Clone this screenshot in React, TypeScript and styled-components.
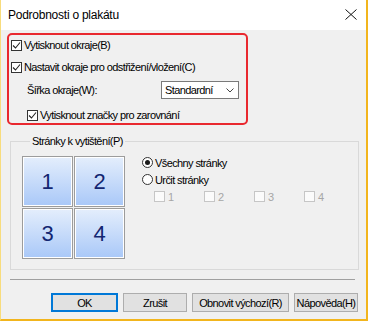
import * as React from 'react'
import styled, { createGlobalStyle } from 'styled-components'

const GlobalStyle = createGlobalStyle`
  html, body {
    margin: 0;
    padding: 0;
    background: #f0f0f0;
  }
  body {
    font-family: "Liberation Sans", Arial, sans-serif;
    font-size: 11px;
    color: #000;
  }
`

const Window = styled.div`
  box-sizing: border-box;
  width: 368px;
  height: 321px;
  background: #f0f0f0;
  border-left: 1px solid #f8dc7c;
  border-right: 2px solid #f2b51d;
  border-bottom: 2px solid #f2b51d;
  display: flex;
  flex-direction: column;
  overflow: hidden;
`

const TitleBar = styled.div`
  height: 29px;
  flex: none;
  background: #fff;
  display: flex;
  align-items: center;
  justify-content: space-between;
  padding: 0 8px 1px 7px;
`

const Title = styled.span`
  font-size: 12px;
  letter-spacing: -0.25px;
`

const CloseButton = styled.button`
  width: 14px;
  height: 14px;
  padding: 0;
  border: none;
  background: none;
  display: flex;
  align-items: center;
  justify-content: center;
`

const Highlight = styled.div`
  width: 241px;
  margin: 3px 0 0 6px;
  border: 2px solid #e9282f;
  border-radius: 5px;
  box-sizing: border-box;
  padding: 0 0 0 2px;
  display: flex;
  flex-direction: column;
`

const Row = styled.div<{ $h: number; $top: number; $indent?: number }>`
  display: flex;
  align-items: center;
  height: ${p => p.$h}px;
  margin-top: ${p => p.$top}px;
  padding-left: ${p => p.$indent || 0}px;
  gap: 2px;
`

const Label = styled.span<{ $disabled?: boolean }>`
  letter-spacing: -0.6px;
  white-space: nowrap;
  color: ${p => (p.$disabled ? '#a6a6a6' : '#000')};
`

const Box = styled.span<{ $disabled?: boolean }>`
  box-sizing: border-box;
  width: 11px;
  height: 11px;
  flex: none;
  border: 1px solid ${p => (p.$disabled ? '#c6c6c6' : '#333')};
  background: ${p => (p.$disabled ? '#fbfbfb' : '#fff')};
  display: flex;
  align-items: center;
  justify-content: center;
`

const Select = styled.div`
  box-sizing: border-box;
  width: 78px;
  height: 18px;
  margin-left: auto;
  margin-right: 7px;
  border: 1px solid #7a7a7a;
  background: #fff;
  display: flex;
  align-items: center;
  justify-content: space-between;
  padding: 0 4px 0 3px;
`

const Group = styled.fieldset`
  margin: 9px 0 0 9px;
  width: 349px;
  height: 136px;
  box-sizing: border-box;
  border: 1px solid #d9d9d9;
  padding: 8px 0 0 11px;
  display: flex;
  gap: 17px;
`

const Legend = styled.legend`
  padding: 0 2px;
  margin-left: 8px;
  letter-spacing: -0.6px;
  line-height: 14px;
`

const Tiles = styled.div`
  display: grid;
  grid-template-columns: 51px 51px;
  grid-auto-rows: 51px;
  gap: 1px;
  align-self: flex-start;
`

const Tile = styled.div`
  box-sizing: border-box;
  border: 1px solid #9c9c9c;
  box-shadow: inset 0 0 0 1px #fff;
  background: linear-gradient(#e4eefc, #a9c8f8);
  display: flex;
  align-items: center;
  justify-content: center;
  font-size: 22px;
  color: #132671;
  padding-top: 1px;
`

const Options = styled.div`
  display: flex;
  flex-direction: column;
  margin-top: -2px;
`

const Radio = styled.span<{ $checked?: boolean }>`
  box-sizing: border-box;
  width: 11px;
  height: 11px;
  flex: none;
  border-radius: 50%;
  border: 1px solid #333;
  background: #fff;
  display: flex;
  align-items: center;
  justify-content: center;
  &::after {
    content: '';
    width: 5px;
    height: 5px;
    border-radius: 50%;
    background: ${p => (p.$checked ? '#1a1a1a' : 'transparent')};
  }
`

const PageChecks = styled.div`
  display: flex;
  padding-left: 12px;
  margin-top: 0;
`

const PageCheck = styled.div`
  width: 50px;
  display: flex;
  align-items: center;
  gap: 3px;
  height: 17px;
`

const Separator = styled.div`
  margin: 9px 0 0 9px;
  width: 345px;
  height: 1px;
  background: #a0a0a0;
`

const Footer = styled.div`
  display: flex;
  justify-content: flex-end;
  gap: 5px;
  padding: 13px 8px 0 0;
`

const Button = styled.button<{ $w: number; $default?: boolean }>`
  box-sizing: border-box;
  width: ${p => p.$w}px;
  height: 19px;
  padding: 0;
  font-family: inherit;
  font-size: 11px;
  letter-spacing: -0.6px;
  color: #000;
  background: #e1e1e1;
  border: ${p => (p.$default ? '2px solid #0078d7' : '1px solid #adadad')};
`

const Check = ({ disabled }: { disabled?: boolean }) => (
  <Box $disabled={disabled}>
    {!disabled && (
      <svg width="9" height="9" viewBox="0 0 9 9">
        <path d="M1 4.5 L3.5 7 L8 1.5" fill="none" stroke="#222" strokeWidth="1.1" />
      </svg>
    )}
  </Box>
)

export default function App() {
  return (
    <>
      <GlobalStyle />
      <Window>
        <TitleBar>
          <Title>Podrobnosti o plakátu</Title>
          <CloseButton aria-label="Zavřít">
            <svg width="12" height="11" viewBox="0 0 12 11">
              <path d="M0.5 0.5 L11.5 10.5 M11.5 0.5 L0.5 10.5" stroke="#111" strokeWidth="1" />
            </svg>
          </CloseButton>
        </TitleBar>

        <Highlight>
          <Row $h={20} $top={0}>
            <Check />
            <Label>Vytisknout okraje(B)</Label>
          </Row>
          <Row $h={20} $top={2}>
            <Check />
            <Label>Nastavit okraje pro odstřižení/vložení(C)</Label>
          </Row>
          <Row $h={18} $top={4} $indent={16}>
            <Label>Šířka okraje(W):</Label>
            <Select>
              <Label>Standardní</Label>
              <svg width="8" height="5" viewBox="0 0 8 5">
                <path d="M0.5 0.5 L4 4 L7.5 0.5" fill="none" stroke="#444" strokeWidth="1" />
              </svg>
            </Select>
          </Row>
          <Row $h={16} $top={8} $indent={16}>
            <Check />
            <Label>Vytisknout značky pro zarovnání</Label>
          </Row>
        </Highlight>

        <Group>
          <Legend>Stránky k vytištění(P)</Legend>
          <Tiles>
            {[1, 2, 3, 4].map(n => (
              <Tile key={n}>{n}</Tile>
            ))}
          </Tiles>
          <Options>
            <Row $h={17} $top={0}>
              <Radio $checked />
              <Label>Všechny stránky</Label>
            </Row>
            <Row $h={17} $top={0}>
              <Radio />
              <Label>Určit stránky</Label>
            </Row>
            <PageChecks>
              {[1, 2, 3, 4].map(n => (
                <PageCheck key={n}>
                  <Check disabled />
                  <Label $disabled>{n}</Label>
                </PageCheck>
              ))}
            </PageChecks>
          </Options>
        </Group>

        <Separator />

        <Footer>
          <Button $w={67} $default>OK</Button>
          <Button $w={64}>Zrušit</Button>
          <Button $w={97}>Obnovit výchozí(R)</Button>
          <Button $w={64}>Nápověda(H)</Button>
        </Footer>
      </Window>
    </>
  )
}
